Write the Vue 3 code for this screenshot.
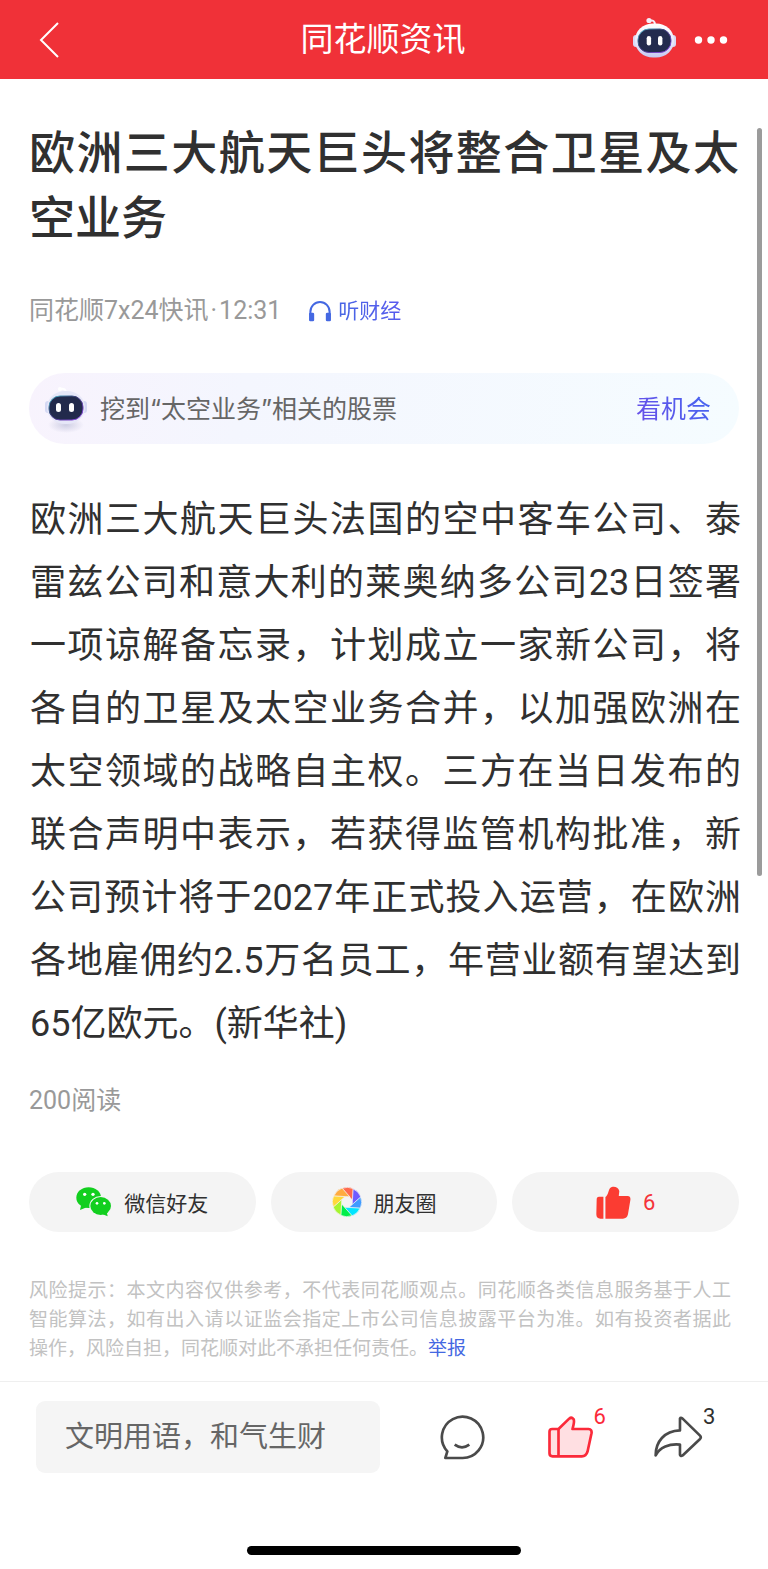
<template>
  <div class="page">
    <header class="topbar">
      <button class="icon-btn back" aria-label="返回">
        <svg width="22" height="38" viewBox="0 0 22 38" fill="none" stroke="#fff" stroke-width="2">
          <path d="M20 2 L3 19 L20 36" />
        </svg>
      </button>
      <h2 class="topbar-title">同花顺资讯</h2>
      <div class="topbar-right">
        <button class="icon-btn" aria-label="智能助手">
          <svg width="45" height="47" viewBox="0 0 45 47">
            <defs>
              <linearGradient id="head" x1="0" y1="0" x2="0" y2="1">
                <stop offset="0" stop-color="#ffffff" />
                <stop offset="0.6" stop-color="#e6e6fa" />
                <stop offset="1" stop-color="#c5c8f0" />
              </linearGradient>
              <linearGradient id="rim" x1="0" y1="0" x2="1" y2="1">
                <stop offset="0" stop-color="#53c8d8" />
                <stop offset="0.4" stop-color="#3a3f78" />
                <stop offset="1" stop-color="#9a4cf0" />
              </linearGradient>
            </defs>
            <path d="M17 5 Q23 3 23 9" fill="none" stroke="#f4eefa" stroke-width="2" />
            <circle cx="17" cy="4.500" r="2.600" fill="#f4eefa" />
            <rect x="1" y="19" width="6" height="12" rx="3" fill="#d9daf5" />
            <rect x="38" y="19" width="6" height="12" rx="3" fill="#d9daf5" />
            <rect x="3" y="7.500" width="39" height="34" rx="18" ry="16.500" fill="url(#head)" />
            <rect x="6" y="13" width="33" height="23.500" rx="11" fill="#232b4e" stroke="url(#rim)" />
            <rect x="14.700" y="20" width="4.400" height="9.500" rx="2.200" fill="#fff" />
            <rect x="26" y="20" width="4.400" height="9.500" rx="2.200" fill="#fff" />
          </svg>
        </button>
        <button class="icon-btn" aria-label="更多">
          <svg width="34" height="10" viewBox="0 0 34 10" fill="#fff">
            <circle cx="4.500" cy="5" r="3.700" />
            <circle cx="17" cy="5" r="3.700" />
            <circle cx="29.500" cy="5" r="3.700" />
          </svg>
        </button>
      </div>
    </header>

    <main class="article">
      <h1>欧洲三大航天巨头将整合卫星及太空业务</h1>

      <div class="meta">
        <span class="source">
          <span>同花顺7x24快讯</span>
          <span>·</span>
          <span>12:31</span>
        </span>
        <a href="#" class="listen">
          <svg width="24" height="22" viewBox="0 0 70 64">
            <path d="M7 44 V34 A28 28 0 0 1 63 34 V44" fill="none" stroke="#4468e2" stroke-width="6" />
            <rect x="3" y="37" width="15" height="25" rx="4" fill="#4468e2" />
            <rect x="52" y="37" width="15" height="25" rx="4" fill="#4468e2" />
          </svg>
          <span>听财经</span>
        </a>
      </div>

      <a href="#" class="banner">
        <svg class="banner-bot" width="44" height="46" viewBox="0 0 44 46">
          <defs>
            <radialGradient id="shade">
              <stop offset="0" stop-color="#cfcfe4" />
              <stop offset="1" stop-color="#cfcfe4" stop-opacity="0" />
            </radialGradient>
          </defs>
          <ellipse cx="22" cy="39" rx="18" ry="8" fill="url(#shade)" />
          <path d="M17 3 Q22 2 22 7" fill="none" stroke="#fff" stroke-width="2" />
          <circle cx="16" cy="3" r="2" fill="#fff" />
          <rect x="1" y="15" width="6" height="12" rx="3" fill="#d4d8f4" />
          <rect x="37" y="15" width="6" height="12" rx="3" fill="#d4d8f4" />
          <rect x="3" y="5" width="38" height="33" rx="18" ry="16" fill="#e6e7f8" />
          <rect x="5" y="10" width="34" height="24" rx="11" fill="#222a4c" stroke="url(#rim)" />
          <rect x="12" y="17" width="5" height="9" rx="2.500" fill="#fff" />
          <rect x="25" y="17" width="5" height="9" rx="2.500" fill="#fff" />
        </svg>
        <span class="banner-text">挖到“太空业务”相关的股票</span>
        <span class="banner-more">看机会</span>
      </a>

      <p class="content">{{ content }}</p>

      <p class="reads">200阅读</p>

      <div class="share">
        <button class="share-btn">
          <svg width="36" height="30" viewBox="0 0 108 90">
            <g fill="#12cf1f">
              <ellipse cx="38" cy="32" rx="37" ry="31" />
              <path d="M16 52 L12 69 L34 60 Z" />
            </g>
            <ellipse cx="74" cy="57" rx="34" ry="30" fill="#f4f4f4" />
            <g fill="#12cf1f">
              <ellipse cx="74" cy="57" rx="31" ry="27" />
              <path d="M80 82 L95 88 L92 74 Z" />
            </g>
            <g fill="#fff">
              <circle cx="26" cy="22" r="5" />
              <circle cx="51" cy="22" r="5" />
              <circle cx="63" cy="49" r="4" />
              <circle cx="85" cy="49" r="4" />
            </g>
          </svg>
          微信好友
        </button>
        <button class="share-btn">
          <svg width="30" height="30" viewBox="-45 -45 90 90">
            <path
              v-for="(cor, i) in blades"
              :key="cor"
              d="M-15 -41 A44 44 0 0 1 19 -40 L17 -5 L8 -15 Z"
              :fill="cor"
              stroke="#f4f4f4"
              stroke-width="2"
              :transform="`rotate(${i * 45})`"
            />
          </svg>
          朋友圈
        </button>
        <button class="share-btn liked" aria-label="点赞">
          <svg width="35" height="33" viewBox="0 0 104 98" fill="#fb3c32">
            <path d="M9 32 H22 V97 H13 Q1 97 1 84 L2 40 Q2 32 9 32 Z" />
            <path d="M28 33 C37 26 36 14 42 6 C50 -2 66 2 69 14 C70 20 67 26 68 30 H94 Q104 31 102 42 L95 84 Q92 97 80 97 H28 Z" />
          </svg>
          6
        </button>
      </div>

      <p class="risk">
        风险提示：本文内容仅供参考，不代表同花顺观点。同花顺各类信息服务基于人工智能算法，如有出入请以证监会指定上市公司信息披露平台为准。如有投资者据此操作，风险自担，同花顺对此不承担任何责任。<a href="#">举报</a>
      </p>

      <div class="scrollbar"></div>
    </main>

    <footer class="bottom">
      <div class="toolbar">
        <input v-model="comment" type="text" placeholder="文明用语，和气生财" aria-label="评论" />
        <button class="tool" aria-label="查看评论">
          <svg width="46" height="46" viewBox="0 0 136 138" fill="none" stroke="#4a4a4a" stroke-width="8">
            <path d="M68 132 H18 L24 112 A62 62 0 1 1 68 132 Z" stroke-linejoin="round" />
            <path d="M46 92 Q68 108 90 92" />
          </svg>
        </button>
        <button class="tool" aria-label="赞">
          <span class="tool-icon">
            <svg width="47" height="44" viewBox="0 0 140 132" fill="#ffdfe2" stroke="#fb2a3a" stroke-width="8" stroke-linejoin="round">
              <path d="M15 42 H34 L66 11 Q73 5 79 12 Q82 17 79 30 L76 42 H124 Q135 43 133 55 L121 110 Q117 124 104 124 H16 Q7 124 7 115 V50 Q7 42 15 42 Z" />
              <path d="M34 42 V124" />
            </svg>
            <span class="badge red">6</span>
          </span>
        </button>
        <button class="tool" aria-label="分享">
          <span class="tool-icon">
            <svg width="50" height="44" viewBox="0 0 152 132" fill="none" stroke="#4a4a4a" stroke-width="8" stroke-linejoin="round">
              <path d="M82 46 V10 Q84 6 90 10 L143 62 Q148 67 143 72 L90 122 Q84 126 82 120 V89 C50 86 20 96 8 122 C8 80 34 48 82 46 Z" />
            </svg>
            <span class="badge">3</span>
          </span>
        </button>
      </div>
      <div class="home-indicator"></div>
    </footer>
  </div>
</template>

<script setup>
import { ref } from 'vue'

const comment = ref('')

const content =
  '欧洲三大航天巨头法国的空中客车公司、泰雷兹公司和意大利的莱奥纳多公司23日签署一项谅解备忘录，计划成立一家新公司，将各自的卫星及太空业务合并，以加强欧洲在太空领域的战略自主权。三方在当日发布的联合声明中表示，若获得监管机构批准，新公司预计将于2027年正式投入运营，在欧洲各地雇佣约2.5万名员工，年营业额有望达到65亿欧元。(新华社)'

// clockwise, starting at the top
const blades = [
  '#ff6a4d',
  '#6f5bff',
  '#3f9bff',
  '#00e5ff',
  '#00ee4a',
  '#a6f52f',
  '#ffd83a',
  '#ffab3f'
]
</script>

<style>
body {
  margin: 0;
  background: #fff;
}
</style>

<style scoped>
.page {
  font-family: Roboto, "Noto Sans CJK SC", sans-serif;
  color: #303030;
  background: #fff;
}

h1,
h2,
p {
  margin: 0;
}

a {
  text-decoration: none;
}

button {
  padding: 0;
  border: none;
  background: none;
  font-family: inherit;
  cursor: pointer;
}

svg {
  display: block;
}

.topbar {
  display: grid;
  grid-template-columns: 1fr auto 1fr;
  align-items: center;
  height: 79px;
  padding: 0 40px 0 38px;
  background: #f03138;
}

.icon-btn {
  display: flex;
}

.topbar-title {
  font-size: 33px;
  line-height: 50px;
  font-weight: 400;
  color: #fff;
}

.topbar-right {
  display: flex;
  justify-content: flex-end;
  align-items: center;
  gap: 17px;
}

.article {
  position: relative;
  padding: 42px 29px 18px;
  border-bottom: 1px solid #efefef;
}

h1 {
  font-size: 46px;
  line-height: 65px;
  font-weight: 500;
  text-align: justify;
}

.meta {
  display: flex;
  align-items: center;
  gap: 27px;
  margin-top: 42px;
  font-size: 25px;
  line-height: 36px;
  color: #999;
}

.source {
  display: flex;
  gap: 2px;
}

.listen {
  display: flex;
  align-items: center;
  gap: 6px;
  font-size: 21px;
}

.listen span,
.banner-more {
  color: transparent;
  background: linear-gradient(60deg, #4468e2, #5a58f0);
  background-clip: text;
}

.banner {
  display: flex;
  align-items: center;
  height: 71px;
  margin-top: 44px;
  padding: 0 28px 0 15px;
  border-radius: 36px;
  background: linear-gradient(100deg, #f8f3fd, #f4f6fe 30%, #f5fcff);
  font-family: Inter, "Noto Sans CJK SC", sans-serif;
  font-size: 25px;
  line-height: 36px;
  color: #666;
}

.banner-bot {
  overflow: visible;
}

.banner-text {
  flex: 1;
  margin-left: 12px;
}

.banner .banner-more {
  background-image: linear-gradient(60deg, #6a4ee8, #4466f0);
}

.content {
  margin: 45px -2px 0 1px;
  font-size: 36px;
  line-height: 63px;
  text-align: justify;
}

.reads {
  margin-top: 27px;
  font-size: 25px;
  line-height: 36px;
  color: #999;
}

.share {
  display: flex;
  gap: 15px;
  margin-top: 53px;
}

.share-btn {
  flex: 1;
  display: flex;
  align-items: center;
  justify-content: center;
  gap: 12px;
  height: 60px;
  border-radius: 30px;
  background: #f4f4f4;
  font-size: 21px;
  color: #303030;
}

.share-btn.liked {
  font-size: 22px;
  color: #f5333a;
}

.risk {
  margin-top: 44px;
  margin-right: 8px;
  font-size: 19px;
  line-height: 29px;
  text-align: justify;
  color: #c2c2c2;
}

.risk a {
  display: inline-block;
  color: #4468e2;
}

/* page scroll position, drawn over the article */
.scrollbar {
  position: absolute;
  top: 49px;
  bottom: 505px;
  right: 6px;
  width: 5px;
  border-radius: 3px;
  background: #9b9b9b;
}

.toolbar {
  display: flex;
  align-items: center;
  padding: 19px 36px 0;
}

.toolbar input {
  flex: 1;
  min-width: 0;
  height: 72px;
  box-sizing: border-box;
  margin-right: 28px;
  padding: 0 29px;
  border: none;
  border-radius: 9px;
  outline: none;
  background: #f5f5f5;
  font-family: inherit;
  font-size: 29px;
  color: #303030;
}

.toolbar input::placeholder {
  color: #666;
}

.tool {
  display: flex;
  justify-content: center;
  width: 108px;
}

.tool-icon {
  position: relative;
}

.badge {
  position: absolute;
  left: 100%;
  top: -11px;
  font-size: 22px;
  line-height: 26px;
  color: #303030;
}

.badge.red {
  color: #fb2a3a;
}

.home-indicator {
  width: 274px;
  height: 9px;
  margin: 73px auto 14px;
  border-radius: 5px;
  background: #000;
}
</style>
